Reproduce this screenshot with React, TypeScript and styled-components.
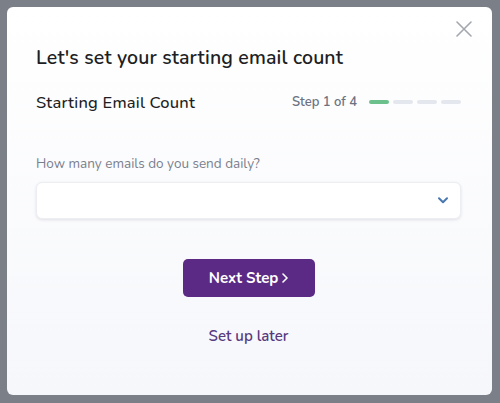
import React from "react";
import styled, { createGlobalStyle } from "styled-components";

const GlobalStyle = createGlobalStyle`
  html, body {
    margin: 0;
    padding: 0;
    background: #7b7f88;
  }
  body {
    font-family: "Nunito", "Lato", "Noto Sans", sans-serif;
    -webkit-font-smoothing: antialiased;
  }
`;

const Page = styled.div`
  width: 500px;
  height: 403px;
  padding: 7px 8px 8px 7px;
  box-sizing: border-box;
`;

const Modal = styled.div`
  position: relative;
  width: 485px;
  height: 388px;
  box-sizing: border-box;
  padding: 39px 31px 0 29px;
  border-radius: 6px;
  background: linear-gradient(180deg, #ffffff 0%, #f6f7fb 100%);
  display: flex;
  flex-direction: column;
`;

const CloseButton = styled.button`
  position: absolute;
  top: 13px;
  right: 19px;
  width: 18px;
  height: 18px;
  padding: 0;
  border: none;
  background: none;
  cursor: pointer;
  display: flex;
  align-items: center;
  justify-content: center;
`;

const Title = styled.h2`
  margin: 0;
  font-size: 19.5px;
  line-height: 24px;
  letter-spacing: 0.15px;
  font-weight: 600;
  color: #1d1f24;
`;

const HeaderRow = styled.div`
  margin-top: 20px;
  display: flex;
  align-items: center;
  justify-content: space-between;
  height: 24px;
`;

const StepName = styled.div`
  font-size: 16.5px;
  letter-spacing: 0.2px;
  font-weight: 500;
  color: #1d1f24;
`;

const StepInfo = styled.div`
  display: flex;
  align-items: center;
  gap: 12px;
`;

const StepText = styled.span`
  font-size: 13px;
  font-weight: 600;
  color: #6b7282;
`;

const Bars = styled.div`
  display: flex;
  gap: 4px;
`;

const Bar = styled.span<{ $active?: boolean }>`
  width: 20px;
  height: 4px;
  border-radius: 2px;
  background: ${(p) => (p.$active ? "#6cc08b" : "#e4e7ee")};
`;

const Label = styled.label`
  margin-top: 41px;
  font-size: 13.5px;
  line-height: 18px;
  color: #7a7f8d;
`;

const SelectBox = styled.div`
  margin-top: 9px;
  height: 37px;
  background: #ffffff;
  border: 1px solid #eceef3;
  border-radius: 6px;
  box-shadow: 0 1px 3px rgba(30, 40, 70, 0.12);
  box-sizing: border-box;
  display: flex;
  align-items: center;
  justify-content: flex-end;
  padding-right: 12px;
`;

const Actions = styled.div`
  margin-top: 40px;
  display: flex;
  flex-direction: column;
  align-items: center;
`;

const NextButton = styled.button`
  width: 132px;
  height: 38px;
  border: none;
  border-radius: 5px;
  background: #5b2a84;
  color: #ffffff;
  font-family: inherit;
  font-size: 15px;
  font-weight: 700;
  cursor: pointer;
  display: flex;
  align-items: center;
  justify-content: center;
  gap: 4px;
`;

const LaterLink = styled.a`
  margin-top: 29px;
  font-size: 15px;
  font-weight: 600;
  color: #573a80;
  text-decoration: none;
  cursor: pointer;
`;

const App = () => {
  return (
    <Page>
      <GlobalStyle />
      <Modal>
        <CloseButton aria-label="Close">
          <svg width="16" height="16" viewBox="0 0 16 16">
            <path d="M1 1 L15 15 M15 1 L1 15" stroke="#a3a7ae" strokeWidth="1.6" strokeLinecap="round" />
          </svg>
        </CloseButton>
        <Title>Let's set your starting email count</Title>
        <HeaderRow>
          <StepName>Starting Email Count</StepName>
          <StepInfo>
            <StepText>Step 1 of 4</StepText>
            <Bars>
              <Bar $active />
              <Bar />
              <Bar />
              <Bar />
            </Bars>
          </StepInfo>
        </HeaderRow>
        <Label>How many emails do you send daily?</Label>
        <SelectBox>
          <svg width="10" height="7" viewBox="0 0 10 7">
            <path d="M1 1.2 L5 5.2 L9 1.2" fill="none" stroke="#4a78b0" strokeWidth="2" strokeLinecap="round" strokeLinejoin="round" />
          </svg>
        </SelectBox>
        <Actions>
          <NextButton>
            Next Step
            <svg width="6" height="10" viewBox="0 0 6 10">
              <path d="M1 1 L5 5 L1 9" fill="none" stroke="#ffffff" strokeWidth="1.6" strokeLinecap="round" strokeLinejoin="round" />
            </svg>
          </NextButton>
          <LaterLink>Set up later</LaterLink>
        </Actions>
      </Modal>
    </Page>
  );
};

export default App;
